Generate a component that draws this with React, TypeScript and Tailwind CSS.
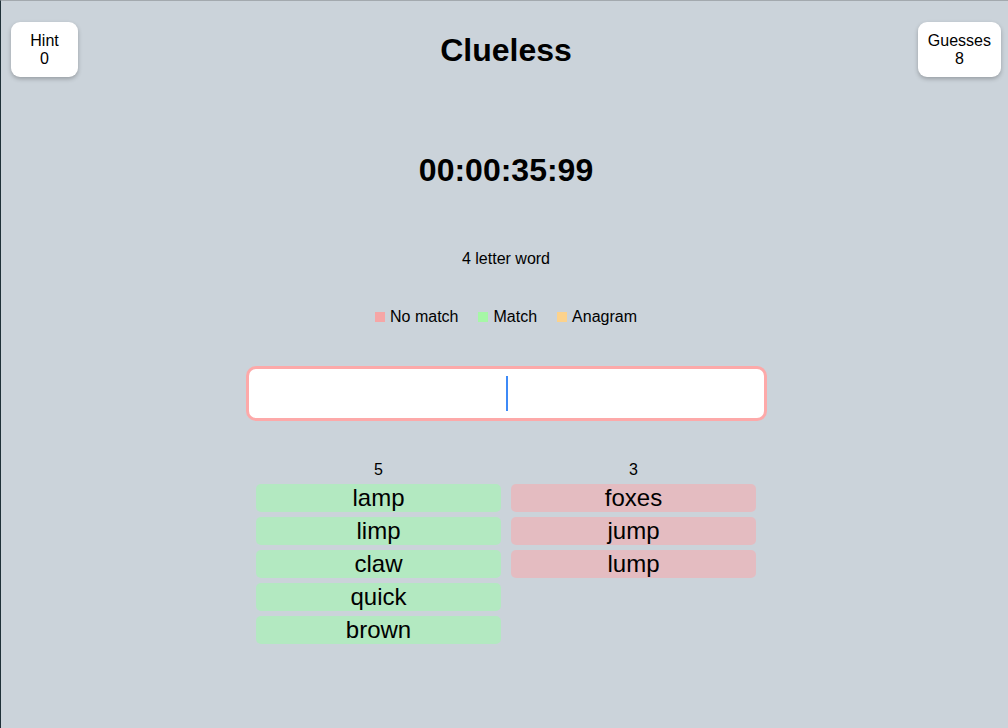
import React from "react";

const left = ["lamp", "limp", "claw", "quick", "brown"];
const right = ["foxes", "jump", "lump"];

export default function App() {
  return (
    <div
      className="w-full min-h-screen bg-[#cbd3da] border-l border-[#1f3038] border-t border-t-[#a3a9ae] pl-[3px] text-black"
      style={{ fontFamily: '"Liberation Sans", Arial, sans-serif' }}
    >
      <div className="grid grid-cols-[1fr_auto_1fr] items-center px-[7px] pt-[21px]">
        <div className="justify-self-start w-[67px] h-[55px] bg-white rounded-[9px] shadow-[0_2px_4px_rgba(0,0,0,0.25)] flex flex-col items-center justify-center text-[16px] leading-[18px]">
          <div>Hint</div>
          <div>0</div>
        </div>
        <div className="text-[32px] font-bold leading-[38px]">Clueless</div>
        <div className="justify-self-end h-[55px] px-[10px] bg-white rounded-[9px] shadow-[0_2px_4px_rgba(0,0,0,0.25)] flex flex-col items-center justify-center text-[16px] leading-[18px]">
          <div>Guesses</div>
          <div>8</div>
        </div>
      </div>

      <div className="flex flex-col items-center">
        <div className="mt-[73px] h-[40px] leading-[40px] text-[32px] font-bold">00:00:35:99</div>
        <div className="mt-[59px] h-[20px] leading-[20px] text-[16px]">4 letter word</div>
        <div className="mt-[38px] h-[20px] flex items-center gap-[20px] text-[16px] leading-[20px]">
          <div className="flex items-center gap-[5px]">
            <span className="w-[10px] h-[10px] bg-[#f6a6a6]" />
            <span>No match</span>
          </div>
          <div className="flex items-center gap-[5px]">
            <span className="w-[10px] h-[10px] bg-[#a6f7a6]" />
            <span>Match</span>
          </div>
          <div className="flex items-center gap-[5px]">
            <span className="w-[10px] h-[10px] bg-[#fcd28c]" />
            <span>Anagram</span>
          </div>
        </div>

        <div className="mt-[39px] relative w-[521px] h-[55px] bg-white border-[3px] border-[#fda9a9] rounded-[10px]">
          <div className="absolute left-[257px] top-[7px] w-[2px] h-[35px] bg-[#3d8af7]" />
        </div>

        <div className="mt-[39px] grid grid-cols-2 gap-x-[10px] w-[500px]">
          <div className="flex flex-col">
            <div className="h-[18px] leading-[20px] text-[16px] text-center mb-[6px]">5</div>
            <div className="flex flex-col gap-[5px]">
              {left.map((w) => (
                <div key={w} className="h-[28px] rounded-[5px] bg-[#b3e9c1] text-center text-[24px] leading-[28px]">
                  {w}
                </div>
              ))}
            </div>
          </div>
          <div className="flex flex-col">
            <div className="h-[18px] leading-[20px] text-[16px] text-center mb-[6px]">3</div>
            <div className="flex flex-col gap-[5px]">
              {right.map((w) => (
                <div key={w} className="h-[28px] rounded-[5px] bg-[#e4bcc1] text-center text-[24px] leading-[28px]">
                  {w}
                </div>
              ))}
            </div>
          </div>
        </div>
      </div>
    </div>
  );
}
